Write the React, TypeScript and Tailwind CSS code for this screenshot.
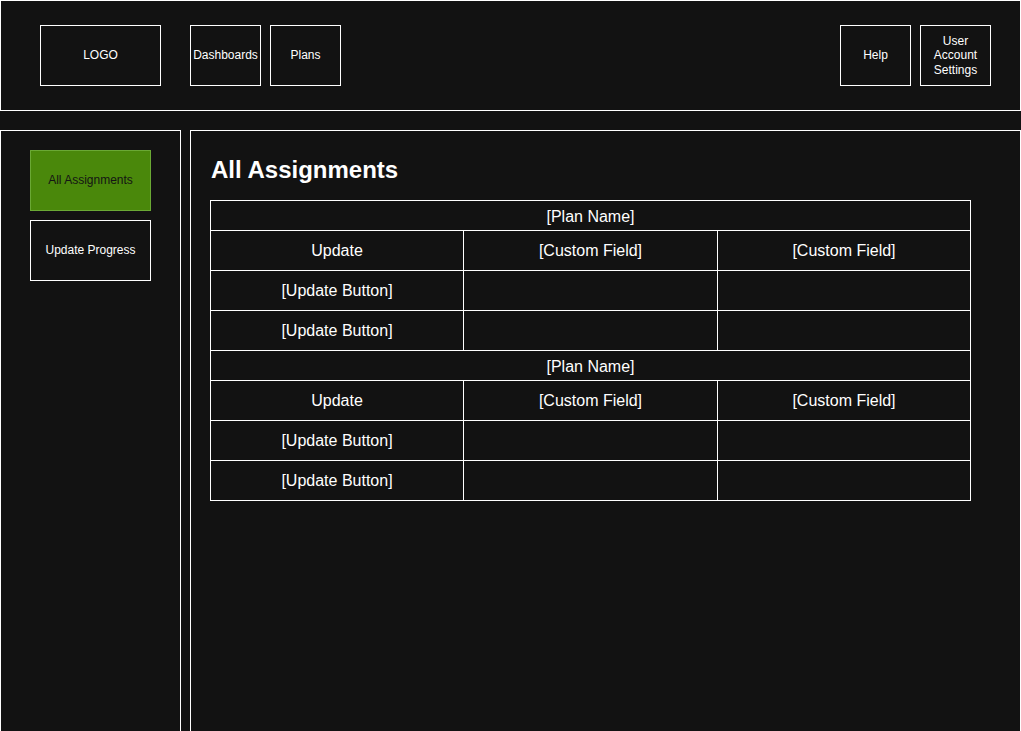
const headerLeft = ["Dashboards", "Plans"];
const headerRight = ["Help", "User Account Settings"];

const plans = [
  { name: "[Plan Name]", rows: ["[Update Button]", "[Update Button]"] },
  { name: "[Plan Name]", rows: ["[Update Button]", "[Update Button]"] },
];

function NavBox({ label, wide }: { label: string; wide?: boolean }) {
  return (
    <div
      className={`box-border flex h-[61px] ${wide ? "w-[121px]" : "w-[71px]"} shrink-0 items-center justify-center border border-white px-[2px] text-center text-[12px] leading-[14.5px] text-white`}
    >
      {label}
    </div>
  );
}

function Cell({ children }: { children?: React.ReactNode }) {
  return (
    <div className="box-border flex h-[40px] items-center justify-center border-r border-b border-white text-[16px] text-white">
      {children}
    </div>
  );
}

export default function App() {
  return (
    <div
      className="h-[731px] w-[1021px] overflow-hidden bg-[#121212]"
      style={{ fontFamily: '"Liberation Sans", Arial, sans-serif' }}
    >
      {/* top bar */}
      <header className="box-border flex h-[111px] w-[1021px] items-center border border-white pl-[39px] pr-[29px]">
        <NavBox label="LOGO" wide />
        <div className="ml-[29px] flex gap-[9px]">
          {headerLeft.map((l) => (
            <NavBox key={l} label={l} />
          ))}
        </div>
        <div className="ml-auto flex gap-[9px]">
          {headerRight.map((l) => (
            <NavBox key={l} label={l} />
          ))}
        </div>
      </header>

      <div className="mt-[19px] flex h-[620px] gap-[9px]">
        {/* sidebar */}
        <aside className="box-border flex w-[181px] shrink-0 flex-col gap-[9px] border border-white pl-[29px] pt-[19px]">
          <div className="box-border flex h-[61px] w-[121px] items-center justify-center border border-[#6aa834] bg-[#4a880b] pb-[2px] text-[12px] text-[#141414]">
            All Assignments
          </div>
          <div className="box-border flex h-[61px] w-[121px] items-center justify-center border border-white pb-[2px] text-[12px] text-white">
            Update Progress
          </div>
        </aside>

        {/* main panel */}
        <main className="box-border w-[831px] border border-white pl-[19px] pt-[27px]">
          <h1 className="pl-[1px] text-[24px] leading-[24px] font-bold text-white">All Assignments</h1>
          <div className="mt-[18px] w-[761px] border-t border-l border-white">
            {plans.map((p, i) => (
              <div key={i}>
                <div className="box-border flex h-[30px] items-center justify-center border-r border-b border-white pt-[2px] text-[16px] text-white">
                  {p.name}
                </div>
                <div className="grid grid-cols-[253px_254px_253px]">
                  <Cell>Update</Cell>
                  <Cell>[Custom Field]</Cell>
                  <Cell>[Custom Field]</Cell>
                  {p.rows.map((r, j) => (
                    <div key={j} className="contents">
                      <Cell>{r}</Cell>
                      <Cell />
                      <Cell />
                    </div>
                  ))}
                </div>
              </div>
            ))}
          </div>
        </main>
      </div>
    </div>
  );
}
